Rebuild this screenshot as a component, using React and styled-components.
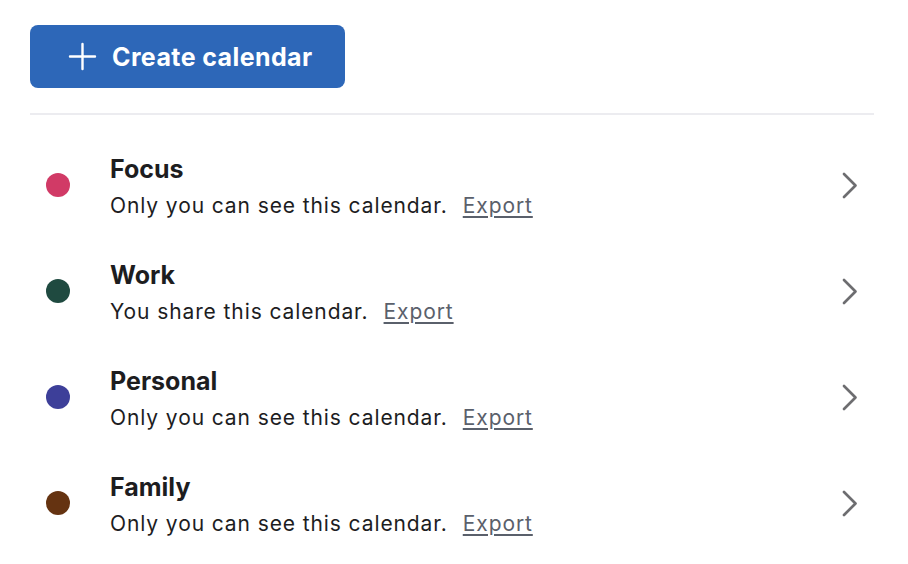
import React from "react";
import styled, { createGlobalStyle } from "styled-components";

const Global = createGlobalStyle`
  html, body { margin: 0; padding: 0; background: #fff; }
  body { font-family: "Inter", "Lato", sans-serif; color: #1d1d1f; }
`;

const Page = styled.div`
  padding: 25px 34px 0 30px;
  display: flex;
  flex-direction: column;
`;

const CreateButton = styled.button`
  align-self: flex-start;
  display: flex;
  align-items: center;
  gap: 15px;
  height: 63px;
  width: 315px;
  padding: 0 0 0 38px;
  border: none;
  border-radius: 8px;
  background: #2d67b8;
  color: #fff;
  font-family: inherit;
  font-size: 25px;
  font-weight: 700;
  letter-spacing: 0.4px;
  cursor: pointer;
`;

const Divider = styled.div`
  height: 2px;
  background: #ececf0;
  margin-top: 25px;
`;

const List = styled.ul`
  list-style: none;
  margin: 0;
  padding: 17px 0 0;
  display: flex;
  flex-direction: column;
`;

const Row = styled.li`
  height: 106px;
  display: grid;
  grid-template-columns: 80px 1fr auto;
  align-items: center;
`;

const Dot = styled.span`
  width: 24px;
  height: 24px;
  border-radius: 50%;
  margin-left: 16px;
  background: ${(p) => p.$color};
`;

const Info = styled.div`
  display: flex;
  flex-direction: column;
  gap: 8.5px;
  padding-top: 4px;
`;

const Title = styled.div`
  font-size: 25px;
  font-weight: 700;
  line-height: 30px;
  color: #1d1d1f;
`;

const Sub = styled.div`
  font-size: 21px;
  line-height: 28px;
  letter-spacing: 0.9px;
  color: #1d1d1f;
  display: flex;
  gap: 15px;
`;

const ExportLink = styled.a`
  color: #5a606b;
  text-decoration: underline;
  text-decoration-thickness: 1.5px;
  text-underline-offset: 3px;
  cursor: pointer;
`;

const Chevron = styled.span`
  display: flex;
  margin-right: 16px;
  color: #6d6d70;
`;

const calendars = [
  { name: "Focus", color: "#d13a66", text: "Only you can see this calendar." },
  { name: "Work", color: "#1f4a40", text: "You share this calendar." },
  { name: "Personal", color: "#3d3f99", text: "Only you can see this calendar." },
  { name: "Family", color: "#653311", text: "Only you can see this calendar." },
];

export default function App() {
  return (
    <>
      <Global />
      <Page>
        <CreateButton>
          <svg width="29" height="29" viewBox="0 0 29 29" fill="none" stroke="#fff" strokeWidth="2.4" strokeLinecap="round">
            <path d="M14.5 2v25M2 14.5h25" />
          </svg>
          Create calendar
        </CreateButton>
        <Divider />
        <List>
          {calendars.map((c) => (
            <Row key={c.name}>
              <Dot $color={c.color} />
              <Info>
                <Title>{c.name}</Title>
                <Sub>
                  <span>{c.text}</span>
                  <ExportLink>Export</ExportLink>
                </Sub>
              </Info>
              <Chevron>
                <svg width="16" height="27" viewBox="0 0 16 27" fill="none" stroke="currentColor" strokeWidth="2.7" strokeLinecap="round" strokeLinejoin="round">
                  <path d="M2 2l11.5 11.5L2 25" />
                </svg>
              </Chevron>
            </Row>
          ))}
        </List>
      </Page>
    </>
  );
}
